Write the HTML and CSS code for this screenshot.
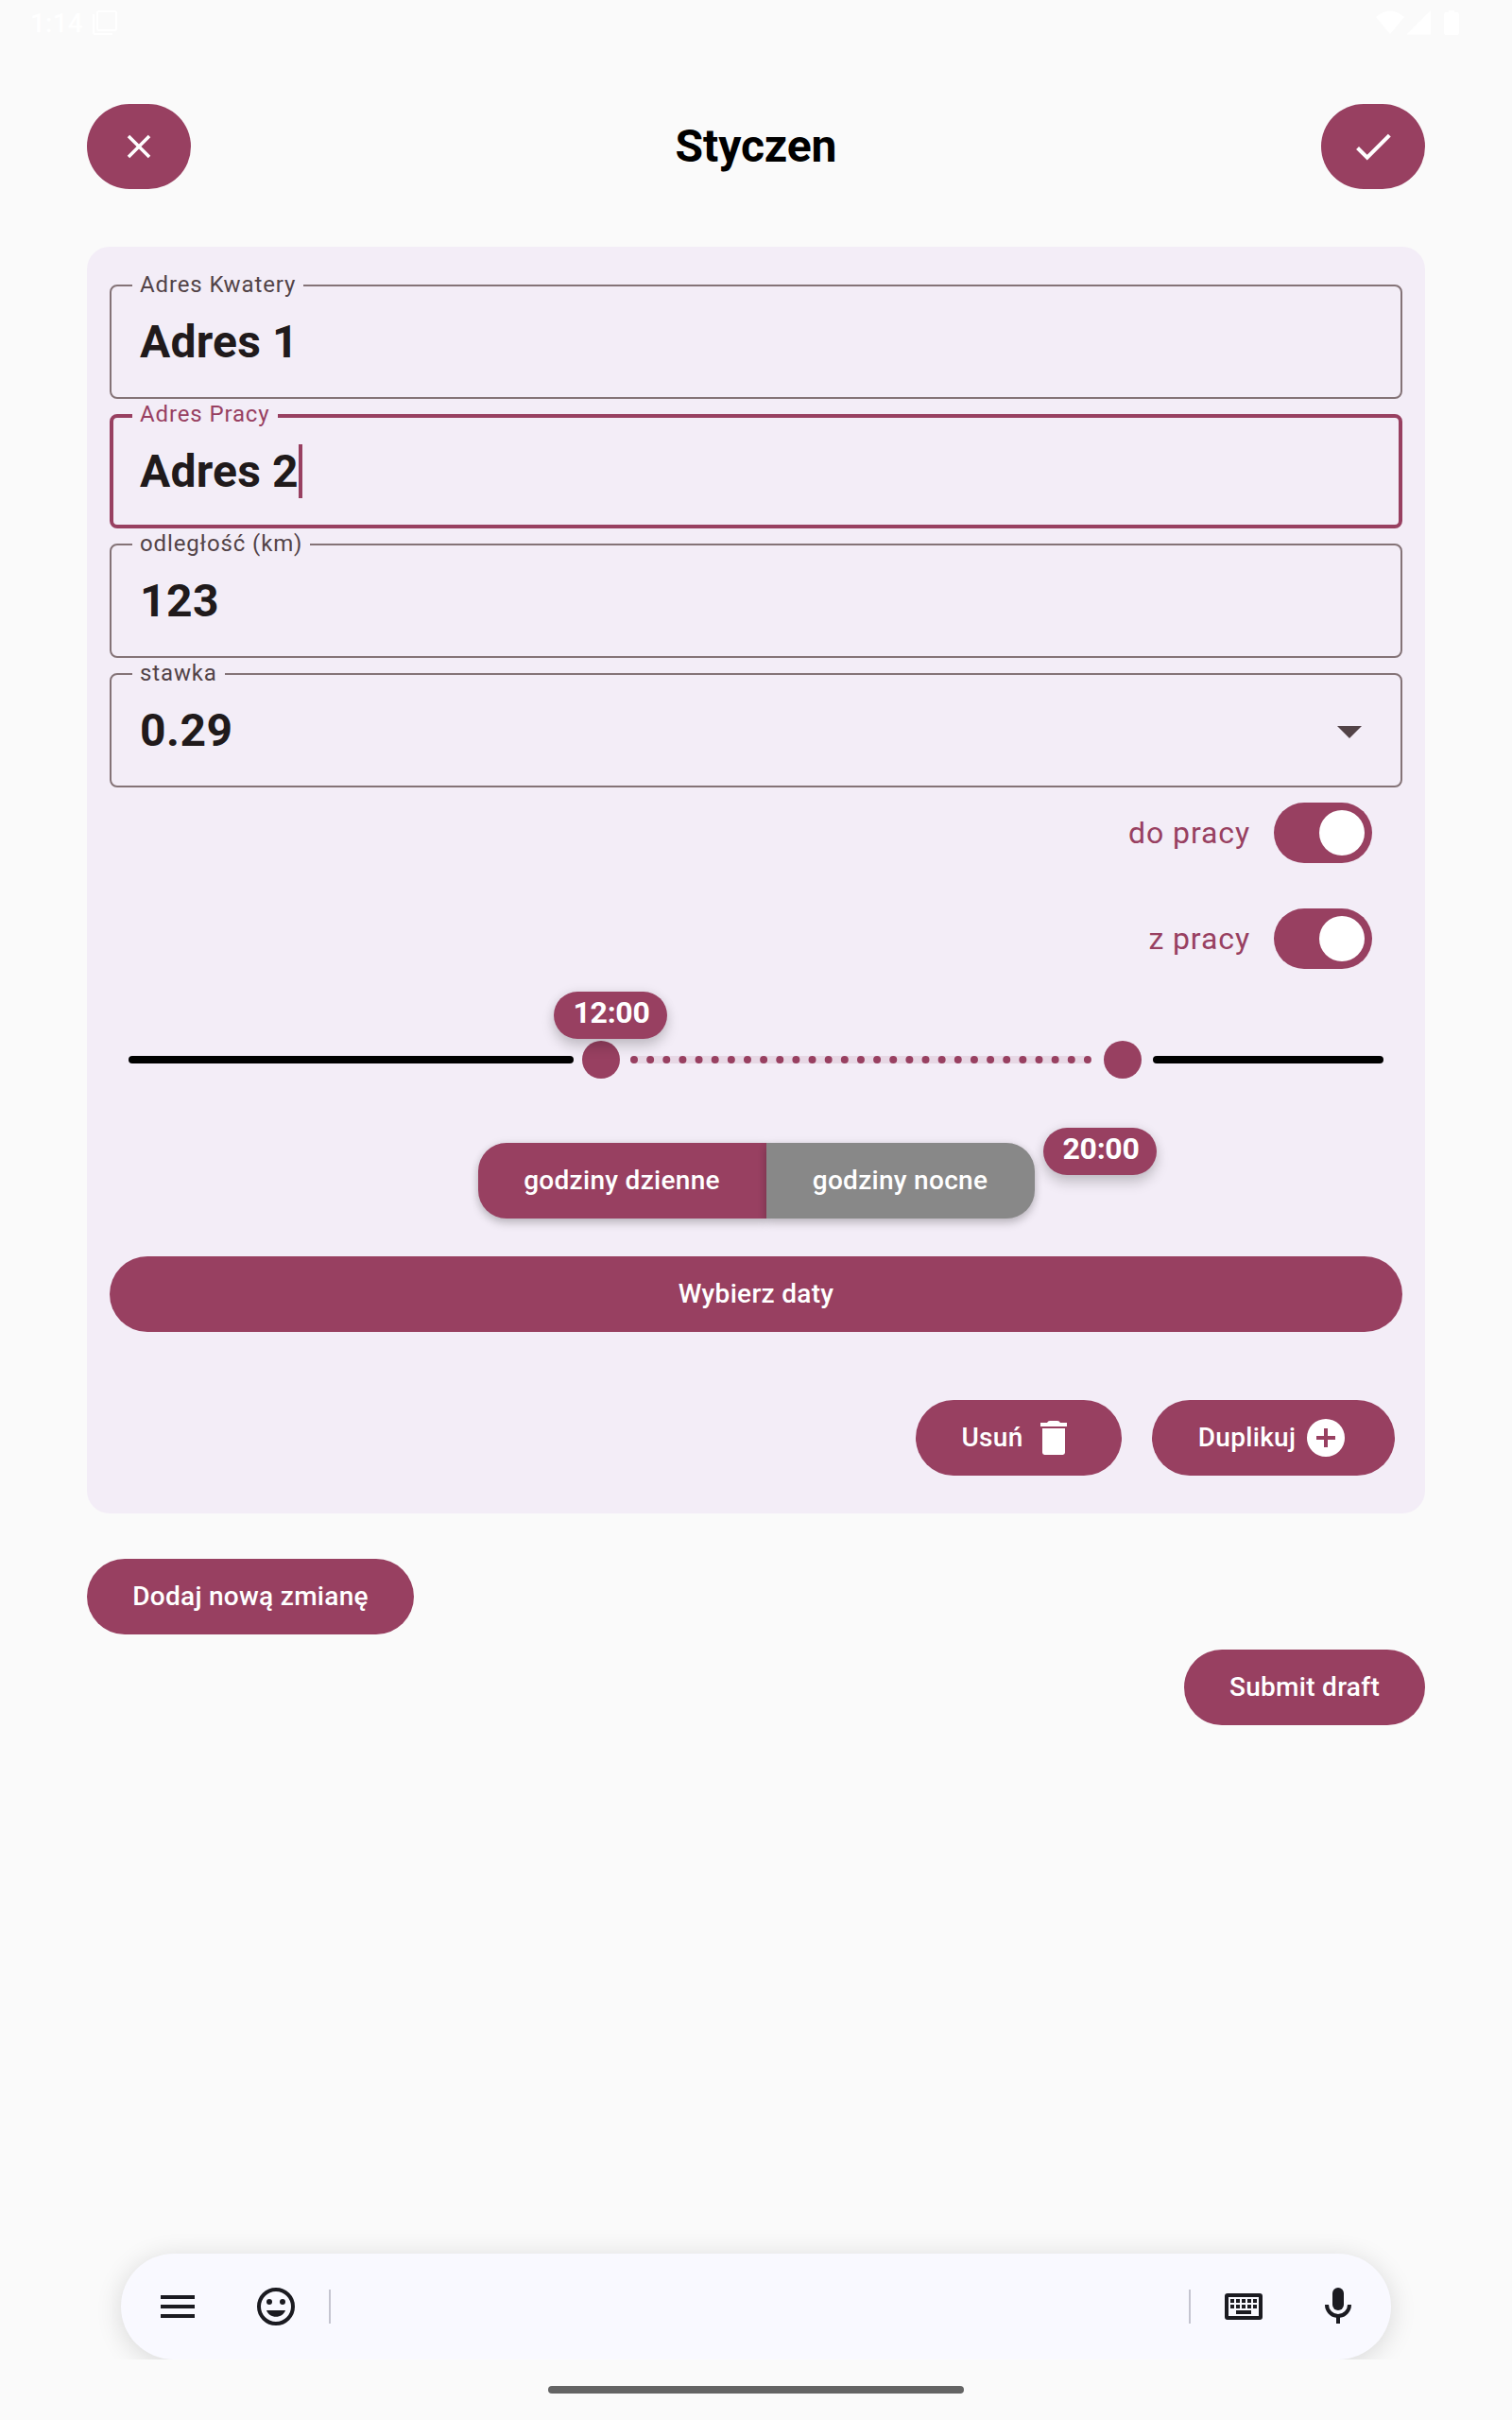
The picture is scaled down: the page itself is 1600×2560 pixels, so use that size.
FILE: index.html
```html
<!DOCTYPE html>
<html lang="pl">
<head>
<meta charset="utf-8">
<title>Styczen</title>
<link rel="stylesheet" href="styles.css">
</head>
<body>
<div class="screen">
  <div class="status">
    <span class="clock">1:14</span>
    <svg class="status-app" width="26" height="26" viewBox="0 0 26 26"><rect x="5" y="1" width="20" height="20" rx="1.5"/><path d="M1 4v19.500q0 1.500 1.500 1.500H21"/></svg>
    <svg class="status-icons" width="90" height="26" viewBox="0 0 90 26"><path d="M0 7Q15-6 30 7L15 25zM32.500 25.500L58 0v25.500zM77 0h6v2h3q2 0 2 2v20q0 2-2 2H74q-2 0-2-2V4q0-2 2-2h3z"/></svg>
  </div>

  <header class="topbar">
    <button class="btn round" aria-label="Zamknij"><svg width="42" height="42" viewBox="0 0 24 24"><path d="M19 6.410L17.590 5 12 10.590 6.410 5 5 6.410 10.590 12 5 17.590 6.410 19 12 13.410 17.590 19 19 17.590 13.410 12z"/></svg></button>
    <h1 class="title">Styczen</h1>
    <button class="btn round" aria-label="Zapisz"><svg width="50" height="50" viewBox="0 0 24 24"><path d="M9 16.200L4.800 12l-1.400 1.400L9 19 21 7l-1.400-1.400z"/></svg></button>
  </header>

  <main class="card">
    <div class="field"><span class="label">Adres Kwatery</span><span class="value">Adres 1</span></div>
    <div class="field focused"><span class="label">Adres Pracy</span><span class="value">Adres 2</span><i class="caret"></i></div>
    <div class="field"><span class="label">odległość (km)</span><span class="value number">123</span></div>
    <div class="field"><span class="label">stawka</span><span class="value number">0.29</span><svg class="arrow" width="26" height="13" viewBox="0 0 26 13"><path d="M0 0h26L13 13z"/></svg></div>

    <div class="toggle"><span>do pracy</span><i class="switch"></i></div>
    <div class="toggle"><span>z pracy</span><i class="switch"></i></div>

    <div class="slider">
      <i class="track before"></i>
      <i class="thumb"></i>
      <svg class="range" width="488" height="8" viewBox="0 0 488 8"><rect width="488" height="8" rx="4" class="range-bg"/><path class="range-dots" d="M4 4H484.100"/></svg>
      <i class="thumb"></i>
      <i class="track after"></i>
      <span class="bubble start">12:00</span>
      <span class="bubble end">20:00</span>
    </div>

    <div class="segments">
      <button class="segment day">godziny dzienne</button><button class="segment night">godziny nocne</button>
    </div>

    <button class="btn wide">Wybierz daty</button>

    <div class="actions">
      <button class="btn remove">Usuń<svg width="48" height="48" viewBox="0 0 24 24"><path d="M6 7h12v12.800q0 1.200-1.200 1.200H7.200Q6 21 6 19.800zM5 4h3.500q.5-1 1.500-1h4q1 0 1.500 1H19v2H5z"/></svg></button>
      <button class="btn duplicate">Duplikuj<svg width="48" height="48" viewBox="0 0 24 24"><path d="M12 2a10 10 0 1 0 0 20 10 10 0 0 0 0-20zm5 11h-4v4h-2v-4H7v-2h4V7h2v4h4z"/></svg></button>
    </div>
  </main>

  <div class="below">
    <button class="btn add">Dodaj nową zmianę</button>
    <button class="btn submit">Submit draft</button>
  </div>

  <div class="keyboard">
    <div class="keybar">
      <svg width="48" height="48" viewBox="0 0 24 24"><path d="M3 6h18v2H3zm0 5h18v2H3zm0 5h18v2H3z"/></svg>
      <svg class="emoji" width="48" height="48" viewBox="0 0 24 24"><circle class="ring" cx="12" cy="12" r="9"/><circle cx="8.500" cy="9.500" r="1.500"/><circle cx="15.500" cy="9.500" r="1.500"/><path d="M7 14h10c-.7 2-2.700 3.400-5 3.400S7.700 16 7 14z"/></svg>
      <i class="divider"></i>
      <i class="divider right"></i>
      <svg class="keys" width="48" height="48" viewBox="0 0 24 24"><path fill-rule="evenodd" d="M3.500 5h17q1.500 0 1.500 1.500v11q0 1.500-1.500 1.500h-17Q2 19 2 17.500v-11Q2 5 3.500 5zM4 7v10h16V7zM5 8h2v2H5zm3 0h2v2H8zm3 0h2v2h-2zm3 0h2v2h-2zm3 0h2v2h-2zM5 11h2v2H5zm3 0h2v2H8zm3 0h2v2h-2zm3 0h2v2h-2zm3 0h2v2h-2zM8 14h8v2H8z"/></svg>
      <svg class="mic" width="48" height="48" viewBox="0 0 24 24"><rect x="9" y="2" width="6" height="12" rx="3"/><path d="M5 11h2a5 5 0 0 0 10 0h2a7 7 0 0 1-6 6.920V21h-2v-3.080A7 7 0 0 1 5 11z"/></svg>
    </div>
  </div>
  <div class="navbar"><i class="handle"></i></div>
</div>
</body>
</html>
```

FILE: styles.css
```css
* { box-sizing: border-box; }

body {
  margin: 0;
  background: #fafafa;
  font-family: Roboto, "Liberation Sans", sans-serif;
}

i { display: block; font-style: normal; }
svg { display: block; flex: none; }

.screen {
  width: 1600px;
  height: 2560px;
  display: flex;
  flex-direction: column;
  overflow: hidden;
}

.status {
  height: 48px;
  display: flex;
  align-items: center;
  padding: 0 54px 0 32px;
  color: #fff;
}
.clock { width: 66px; font-size: 28px; letter-spacing: 0.2px; font-weight: 500; }
.status-app { fill: none; stroke: #fff; stroke-width: 2; }
.status-icons { fill: #fff; margin-left: auto; }

.topbar {
  display: flex;
  justify-content: space-between;
  align-items: center;
  margin: 62px 92px 61px;
}
.title {
  margin: 0;
  font-size: 48px;
  line-height: 56px;
  font-weight: 700;
  letter-spacing: -0.1px;
  color: #000;
}

.btn {
  height: 80px;
  display: flex;
  align-items: center;
  justify-content: center;
  gap: 8px;
  padding: 0 48px;
  border: 0;
  border-radius: 45px;
  background: #984061;
  color: #fff;
  font: 500 28px/40px Roboto, "Liberation Sans", sans-serif;
  letter-spacing: 0.3px;
  white-space: nowrap;
}
.btn svg { fill: #fff; }
.btn.round { width: 110px; height: 90px; padding: 0; }
.btn.wide { margin-top: 40px; width: 100%; }

.card {
  display: flex;
  flex-direction: column;
  height: 1340px;
  margin: 0 92px;
  padding: 40px 24px;
  border-radius: 24px;
  background: #f3edf7;
}

.field {
  position: relative;
  flex: none;
  display: flex;
  align-items: center;
  height: 121px;
  margin-bottom: 16px;
  padding: 0 30px;
  border: 2px solid #847377;
  border-radius: 8px;
}
.label {
  position: absolute;
  left: 22px;
  top: -18px;
  padding: 0 8px;
  background: #f3edf7;
  color: #524347;
  font-size: 24px;
  line-height: 32px;
  letter-spacing: 0.87px;
}
.value {
  color: #201a1b;
  font-size: 48px;
  line-height: 56px;
  font-weight: 700;
  letter-spacing: 0.2px;
}
.number { letter-spacing: 0.5px; }
.focused { border: 4px solid #984061; padding: 0 28px; }
.focused .label { left: 20px; top: -20px; color: #984061; }
.caret { width: 4px; height: 57px; background: #984061; margin-left: 0; }
.arrow { margin: 3px 11px 0 auto; fill: #524347; }

.toggle {
  flex: none;
  height: 64px;
  display: flex;
  align-items: center;
  justify-content: flex-end;
  gap: 25px;
  margin: 0 32px 48px 0;
  color: #984061;
  font-size: 32px;
  line-height: 48px;
  letter-spacing: 0.9px;
}
.switch {
  width: 104px;
  height: 64px;
  padding: 8px 8px 8px 48px;
  border-radius: 32px;
  background: #984061;
}
.switch::before {
  content: "";
  display: block;
  width: 48px;
  height: 48px;
  border-radius: 50%;
  background: #fff;
}

.slider {
  position: relative;
  flex: none;
  height: 96px;
  display: flex;
  align-items: center;
  margin: 0 20px 40px;
}
.track { height: 8px; border-radius: 4px; background: #000; }
.before { width: 471px; margin-right: 9px; }
.after { flex: 1; margin-left: 12px; }
.thumb { width: 40px; height: 40px; border-radius: 50%; background: #984061; }
.range { margin: 0 13px 0 11px; }
.range-bg { fill: #984061; opacity: 0.12; }
.range-dots {
  fill: none;
  stroke: #984061;
  stroke-width: 8;
  stroke-linecap: round;
  stroke-dasharray: 0 17.140;
}
.bubble {
  position: absolute;
  width: 120px;
  height: 50px;
  padding-left: 2px;
  border-radius: 25px;
  background: #984061;
  color: #fff;
  font-size: 32px;
  line-height: 45px;
  font-weight: 700;
  letter-spacing: -0.3px;
  text-align: center;
  box-shadow: 0 8px 14px rgba(0, 0, 0, 0.18), 0 0 12px rgba(0, 0, 0, 0.08);
}
.start { left: 450px; top: -24px; }
.end { left: 968px; top: 120px; }

.segments { flex: none; display: flex; justify-content: center; }
.segment {
  height: 80px;
  padding: 0;
  border: 0;
  color: #fff;
  font: 500 28px/40px Roboto, "Liberation Sans", sans-serif;
  letter-spacing: 0.3px;
  box-shadow: 0 5px 10px rgba(0, 0, 0, 0.2), 0 0 8px rgba(0, 0, 0, 0.08);
}
.day { width: 305px; border-radius: 30px 0 0 30px; background: #984061; }
.night { width: 284px; border-radius: 0 30px 30px 0; background: #888; }

.actions {
  display: flex;
  justify-content: flex-end;
  gap: 32px;
  margin: 72px 8px 0 0;
}
.remove { width: 218px; }
.duplicate { width: 257px; }

.below {
  display: flex;
  flex-direction: column;
  gap: 16px;
  margin: 48px 92px 0;
}
.add { align-self: flex-start; width: 346px; }
.submit { align-self: flex-end; width: 255px; }

.keyboard {
  height: 152px;
  margin-top: auto;
  padding: 40px 128px 0;
  overflow: hidden;
}
.keybar {
  height: 112px;
  display: flex;
  align-items: center;
  padding: 0 32px 0 36px;
  border-radius: 56px;
  background: #f9f9ff;
  fill: #1b1b21;
  box-shadow: 0 4px 28px rgba(0, 0, 0, 0.14);
}
.emoji { margin-left: 56px; }
.ring { fill: none; stroke: #1b1b21; stroke-width: 2; }
.divider { width: 2px; height: 36px; margin-left: 32px; background: #c5c5d0; }
.divider.right { margin-left: auto; margin-right: 32px; }
.mic { margin-left: 52px; }
.navbar { height: 64px; padding-top: 28px; }
.handle {
  width: 440px;
  height: 8px;
  margin: 0 auto;
  border-radius: 4px;
  background: #646464;
}
```
